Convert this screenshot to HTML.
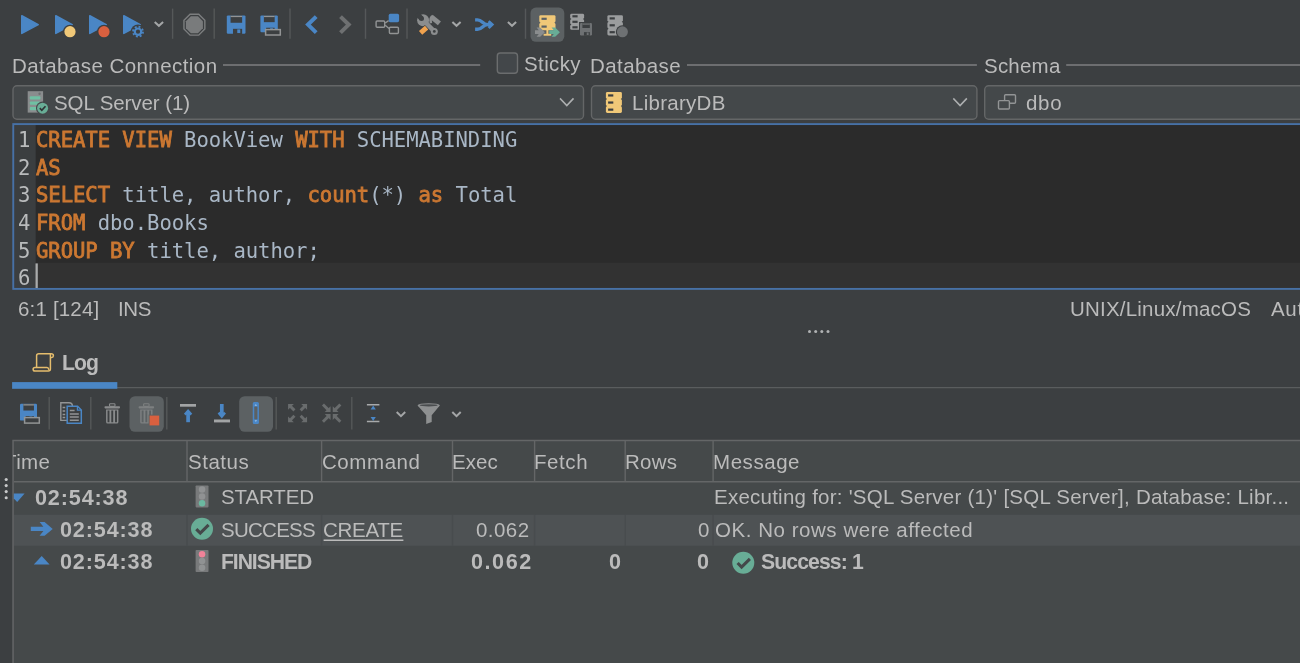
<!DOCTYPE html>
<html lang="en"><head><meta charset="utf-8"><title>SQL Workbench - Log</title>
<style>
html,body{margin:0;padding:0;background:#3c3f41;}
body{width:1300px;height:663px;overflow:hidden;position:relative;font-family:"Liberation Sans", sans-serif;color:#bbbbbb;}
#g{position:absolute;left:0;top:0;}
.t{position:absolute;will-change:transform;white-space:pre;font-size:20.5px;line-height:26px;color:#bbbbbb;}
.b{font-weight:bold;}
.ln,.cl{position:absolute;will-change:transform;white-space:pre;font-family:"DejaVu Sans Mono", "Liberation Mono", monospace;font-size:20.6px;line-height:27.6px;letter-spacing:-0.06px;}
.ln{left:17.6px;color:#b9bbbc;}
.cl{left:35.75px;color:#a9b7c6;}
.k{color:#cc7832;-webkit-text-stroke:0.8px #cc7832;}
.i{color:#a9b7c6;}
</style></head><body>
<svg id="g" width="1300" height="663" viewBox="0 0 1300 663">
<path d="M21.8 15.8 L38.2 24.6 L21.8 33.4 Z" fill="#4a86c5" stroke="#4a86c5" stroke-width="1.6" stroke-linejoin="round"/>
<path d="M55.8 15.8 L72.2 24.6 L55.8 33.4 Z" fill="#4a86c5" stroke="#4a86c5" stroke-width="1.6" stroke-linejoin="round"/>
<circle cx="70" cy="31.7" r="7" fill="#3c3f41"/><circle cx="70" cy="31.7" r="5.6" fill="#f0c878"/>
<path d="M89.8 15.8 L106.2 24.6 L89.8 33.4 Z" fill="#4a86c5" stroke="#4a86c5" stroke-width="1.6" stroke-linejoin="round"/>
<circle cx="104" cy="31.7" r="7" fill="#3c3f41"/><circle cx="104" cy="31.7" r="5.6" fill="#d9603f"/>
<path d="M123.8 15.8 L140.2 24.6 L123.8 33.4 Z" fill="#4a86c5" stroke="#4a86c5" stroke-width="1.6" stroke-linejoin="round"/>
<circle cx="138" cy="31.7" r="7.2" fill="#3c3f41"/><circle cx="138" cy="31.7" r="3.2" fill="none" stroke="#4a86c5" stroke-width="2.2"/><circle cx="138" cy="31.7" r="5" fill="none" stroke="#4a86c5" stroke-width="1.8" stroke-dasharray="1.96 1.96"/>
<path d="M154.70 22.00 L158.90 25.80 L163.10 22.00" fill="none" stroke="#a4a6a7" stroke-width="2.0"/>
<path d="M172.6 8.6 V38.8" stroke="#555859" stroke-width="1.4"/>
<polygon points="204.84,29.02 198.72,35.14 190.08,35.14 183.96,29.02 183.96,20.38 190.08,14.26 198.72,14.26 204.84,20.38" fill="none" stroke="#7c7e7f" stroke-width="1.4"/>
<polygon points="202.90,28.22 197.92,33.20 190.88,33.20 185.90,28.22 185.90,21.18 190.88,16.20 197.92,16.20 202.90,21.18" fill="#797b7c"/>
<path d="M214.2 8.6 V38.8" stroke="#555859" stroke-width="1.4"/>
<rect x="226.8" y="15.4" width="18.69999999999999" height="18.4" rx="1.2" fill="#4a86c5"/><rect x="230.54000000000002" y="15.4" width="11.593999999999992" height="7.359999999999999" fill="#3c3f41"/><rect x="230.54000000000002" y="15.8" width="11.593999999999992" height="1.3" fill="#929495"/><rect x="232.971" y="28.832" width="9.162999999999995" height="5.168" fill="#3c3f41"/><rect x="237.272" y="29.384" width="2.991999999999998" height="3.6799999999999997" fill="#4a86c5"/>
<rect x="260.4" y="15.4" width="17.400000000000034" height="16.9" rx="1.2" fill="#4a86c5"/><rect x="263.88" y="15.4" width="10.788000000000022" height="6.76" fill="#3c3f41"/><rect x="263.88" y="15.8" width="10.788000000000022" height="1.3" fill="#929495"/><rect x="266.142" y="27.737" width="8.526000000000016" height="4.763" fill="#3c3f41"/><rect x="270.144" y="28.244" width="2.7840000000000056" height="3.38" fill="#4a86c5"/>
<rect x="265.6" y="29.6" width="14.7" height="5.4" fill="#3c3f41" stroke="#929495" stroke-width="1.5"/>
<path d="M290 8.6 V38.8" stroke="#555859" stroke-width="1.4"/>
<path d="M316.2 16.6 L308 24.6 L316.2 32.6" fill="none" stroke="#4a86c5" stroke-width="4"/>
<path d="M340.5 16.6 L348.7 24.6 L340.5 32.6" fill="none" stroke="#6e7071" stroke-width="4"/>
<path d="M365.5 8.6 V38.8" stroke="#555859" stroke-width="1.4"/>
<rect x="388.7" y="13.8" width="10.4" height="8.4" rx="1.6" fill="#4a86c5"/>
<rect x="376.1" y="21" width="8.6" height="6.2" rx="1" fill="none" stroke="#929495" stroke-width="1.4"/>
<rect x="389.4" y="27.2" width="9" height="6.3" rx="1" fill="none" stroke="#929495" stroke-width="1.4"/>
<path d="M385.2 23 L388.6 20.6 M385.2 25.2 L389 28.6" stroke="#929495" stroke-width="1.3"/>
<path d="M407 8.6 V38.8" stroke="#555859" stroke-width="1.4"/>
<g><path d="M424.6 21.6 L434.3 31.4" stroke="#8b8d8e" stroke-width="4.4" stroke-linecap="round"/><circle cx="423.1" cy="20.2" r="6" fill="#8b8d8e"/><circle cx="421.5" cy="18.5" r="2.5" fill="#3c3f41"/><path d="M421.5 18.5 L416.6 13.6" stroke="#3c3f41" stroke-width="5" /><circle cx="434.3" cy="31.4" r="3.5" fill="#8b8d8e"/><circle cx="434.3" cy="31.4" r="1.4" fill="#3c3f41"/><path d="M431.4 16.8 L439.4 23.4" stroke="#8b8d8e" stroke-width="4.8" stroke-linecap="butt"/><path d="M433 16 Q429.6 17.6 430.9 23.2" fill="none" stroke="#8b8d8e" stroke-width="2.6"/><path d="M427 27.4 L420.2 33.2" stroke="#3c3f41" stroke-width="6.6"/><path d="M426.6 27.7 L420.6 32.9" stroke="#f0a24e" stroke-width="5" stroke-linecap="butt"/></g>
<path d="M452.40 22.00 L456.50 25.80 L460.60 22.00" fill="none" stroke="#a4a6a7" stroke-width="2.0"/>
<path d="M475.1 19.9 H477.5 C482.4 19.9 482.6 24.6 487.5 24.6 H491.5 M475.1 29.3 H477.5 C482.4 29.3 482.6 24.6 487.5 24.6" fill="none" stroke="#4a86c5" stroke-width="3.4"/>
<path d="M488.6 21.2 L492.2 24.6 L488.6 28" fill="none" stroke="#4a86c5" stroke-width="2.8"/>
<path d="M507.90 22.00 L512.00 25.80 L516.10 22.00" fill="none" stroke="#a4a6a7" stroke-width="2.0"/>
<path d="M525.5 8.6 V38.8" stroke="#555859" stroke-width="1.4"/>
<rect x="530.5" y="7.6" width="33.8" height="34.2" rx="5.5" fill="#5c6163"/>
<rect x="540.3" y="16" width="14.2" height="13" fill="#f0c878"/>
<rect x="539.3" y="15.2" width="16.2" height="7.2" rx="1.4" fill="#f0c878"/><rect x="541.5" y="17.7" width="5.2" height="2.2" fill="#5c6163"/>
<rect x="539.3" y="23" width="16.2" height="7.2" rx="1.4" fill="#f0c878"/><rect x="541.5" y="25.5" width="5.2" height="2.2" fill="#5c6163"/>
<rect x="546.4" y="30" width="2" height="4.2" fill="#f0c878"/><rect x="543.6" y="33.8" width="7.6" height="1.9" fill="#f0c878"/>
<path d="M535 30.300000000000004 H538.785 L536.5849999999999 27.550000000000004 H540.185 L544.9 32.2 L540.185 36.85 H536.5849999999999 L538.785 34.1 H535 Z" fill="#8a8d8e"/>
<path d="M549.2 30.300000000000004 H553.785 L551.5849999999999 27.550000000000004 H555.185 L559.9 32.2 L555.185 36.85 H551.5849999999999 L553.785 34.1 H549.2 Z" fill="#68ad96"/>
<rect x="571.2" y="15" width="11.9" height="14" fill="#9b9d9e"/>
<rect x="570.2" y="13.8" width="13.9" height="5" rx="1.4" fill="#9b9d9e"/><rect x="572.4000000000001" y="15.200000000000001" width="5.2" height="2.2" fill="#3c3f41"/>
<rect x="570.2" y="19.3" width="13.9" height="5" rx="1.4" fill="#9b9d9e"/><rect x="572.4000000000001" y="20.7" width="5.2" height="2.2" fill="#3c3f41"/>
<rect x="570.2" y="24.8" width="13.9" height="5" rx="1.4" fill="#9b9d9e"/><rect x="572.4000000000001" y="26.2" width="5.2" height="2.2" fill="#3c3f41"/>
<rect x="579" y="22" width="14" height="14.6" fill="#3c3f41"/>
<rect x="580" y="23" width="12" height="12.5" rx="1.2" fill="#6e7173"/><rect x="582.4" y="23" width="7.4399999999999995" height="5.0" fill="#3c3f41"/><rect x="582.4" y="23.4" width="7.4399999999999995" height="1.3" fill="#6e7173"/><rect x="583.96" y="32.125" width="5.88" height="3.575" fill="#3c3f41"/><rect x="586.72" y="32.5" width="1.92" height="2.5" fill="#6e7173"/>
<rect x="608.4" y="16" width="13.5" height="18" fill="#9b9d9e"/>
<rect x="607.4" y="15.2" width="15.5" height="6.4" rx="1.4" fill="#9b9d9e"/><rect x="609.6" y="17.299999999999997" width="5.2" height="2.2" fill="#3c3f41"/>
<rect x="607.4" y="22.1" width="15.5" height="6.4" rx="1.4" fill="#9b9d9e"/><rect x="609.6" y="24.2" width="5.2" height="2.2" fill="#3c3f41"/>
<rect x="607.4" y="29.0" width="15.5" height="6.4" rx="1.4" fill="#9b9d9e"/><rect x="609.6" y="31.1" width="5.2" height="2.2" fill="#3c3f41"/>
<circle cx="622.4" cy="31.8" r="6.6" fill="#3c3f41"/><circle cx="622.4" cy="31.8" r="5.5" fill="#6e7173"/>
<path d="M223 65 H480.2 M687 65 H976.9 M1066.2 65 H1300" stroke="#7d7f80" stroke-width="1.4"/>
<rect x="497.3" y="53" width="20.2" height="20.2" rx="3" fill="#43474a" stroke="#6b6d6e" stroke-width="1.4"/>
<rect x="13.0" y="85.8" width="570.5000000000001" height="33.4" rx="4" fill="#44484a" stroke="#646667" stroke-width="1.4"/>
<rect x="591.5" y="85.8" width="385.4000000000001" height="33.4" rx="4" fill="#44484a" stroke="#646667" stroke-width="1.4"/>
<rect x="984.7" y="85.8" width="334.6" height="33.4" rx="4" fill="#44484a" stroke="#646667" stroke-width="1.4"/>
<path d="M560.6 99.0 L566.8 105.6 L573.0 99.0" fill="none" stroke="#adafb0" stroke-width="1.6" stroke-linecap="square"/>
<path d="M953.9 99.0 L960.0999999999999 105.6 L966.3 99.0" fill="none" stroke="#adafb0" stroke-width="1.6" stroke-linecap="square"/>
<rect x="27.7" y="91.2" width="15.4" height="21.4" fill="#8a8d8e"/>
<rect x="29.8" y="96.2" width="10.6" height="3.2" rx="1" fill="#6fc0a3"/>
<rect x="29.8" y="101.60000000000001" width="10.6" height="3.2" rx="1" fill="#6fc0a3"/>
<rect x="29.8" y="107.0" width="10.6" height="3.2" rx="1" fill="#6fc0a3"/>
<circle cx="39.6" cy="93.8" r="1.2" fill="#6e7173"/>
<circle cx="42.6" cy="108.2" r="6.6" fill="#44484a"/><circle cx="42.6" cy="108.2" r="5.5" fill="#68ad96"/>
<path d="M39.8 108.2 L41.8 110.3 L45.5 106.2" fill="none" stroke="#2f3335" stroke-width="1.7"/>
<rect x="606.9" y="93" width="14" height="19" fill="#f0c878"/>
<rect x="605.9" y="92.1" width="16" height="6.7" rx="1.4" fill="#f0c878"/><rect x="608.1" y="94.35" width="5.2" height="2.2" fill="#3a3d3f"/>
<rect x="605.9" y="99.19999999999999" width="16" height="6.7" rx="1.4" fill="#f0c878"/><rect x="608.1" y="101.44999999999999" width="5.2" height="2.2" fill="#3a3d3f"/>
<rect x="605.9" y="106.3" width="16" height="6.7" rx="1.4" fill="#f0c878"/><rect x="608.1" y="108.55" width="5.2" height="2.2" fill="#3a3d3f"/>
<rect x="1004.6" y="94.7" width="10.9" height="8.6" rx="1" fill="none" stroke="#929495" stroke-width="1.4"/>
<rect x="998.5" y="100.6" width="10.9" height="8.4" rx="1" fill="#44484a" stroke="#929495" stroke-width="1.4"/>
<rect x="13.3" y="124" width="1300" height="164.9" fill="#2b2b2b"/>
<rect x="13.3" y="124" width="22.4" height="164.9" fill="#3b3e40"/>
<rect x="35.7" y="262.8" width="1300" height="26" fill="#323232"/>
<rect x="13.25" y="124.1" width="1300" height="164.8" fill="none" stroke="#4771a6" stroke-width="1.9"/>
<rect x="35.5" y="263.4" width="2.3" height="24.6" fill="#a9abac"/>
<circle cx="809.5" cy="331.6" r="1.5" fill="#b0b2b3"/>
<circle cx="815.7" cy="331.6" r="1.5" fill="#b0b2b3"/>
<circle cx="821.8" cy="331.6" r="1.5" fill="#b0b2b3"/>
<circle cx="828" cy="331.6" r="1.5" fill="#b0b2b3"/>
<path d="M117 387.6 H1300" stroke="#5a5d5e" stroke-width="1.4"/>
<rect x="12.1" y="382.1" width="105.2" height="6.7" fill="#4a86c5"/>
<path d="M36.6 367.4 V355.8 Q36.6 353.7 38.8 353.7 H51.2 Q53.4 353.7 53.4 355.8 Q53.4 357.4 51.6 357.4 M50.4 354 V369 Q50.4 371 48.2 371 H35 Q33.1 371 33.1 369.2 Q33.1 367.4 35 367.4 H47 Q48.6 367.4 48.6 369.2" fill="none" stroke="#e5bd6d" stroke-width="1.5" stroke-linejoin="round" stroke-linecap="round"/>
<rect x="20" y="403.8" width="17" height="16.80000000000001" rx="1.2" fill="#4a86c5"/><rect x="23.4" y="403.8" width="10.54" height="6.720000000000005" fill="#3c3f41"/><rect x="23.4" y="404.2" width="10.54" height="1.3" fill="#929495"/><rect x="25.61" y="416.064" width="8.33" height="4.736000000000003" fill="#3c3f41"/><rect x="29.520000000000003" y="416.56800000000004" width="2.72" height="3.3600000000000025" fill="#4a86c5"/>
<rect x="24.6" y="417.6" width="14.7" height="5.5" fill="#3c3f41" stroke="#929495" stroke-width="1.5"/>
<path d="M49.2 397 V429.5" stroke="#555859" stroke-width="1.4"/>
<path d="M60.8 402.7 H69 Q72.4 402.7 72.4 406 V420.4 H60.8 Z" fill="#3c3f41" stroke="#929495" stroke-width="1.4"/>
<path d="M62.6 407.6 H65.2 M62.6 411 H65.2 M62.6 414.4 H65.2 M62.6 417.6 H65.2" stroke="#929495" stroke-width="1.5"/>
<path d="M67.2 406.3 H77.6 L81.3 410 V423.2 H67.2 Z" fill="#3c3f41" stroke="#4a86c5" stroke-width="1.5"/>
<path d="M77.4 406.6 V410.2 H81" fill="none" stroke="#4a86c5" stroke-width="1.2"/>
<path d="M69.8 410.6 H74.6 M69.8 413.9 H78.8 M69.8 417.1 H78.8 M69.8 420.3 H78.8" stroke="#929495" stroke-width="1.5"/>
<path d="M90.8 397 V429.5" stroke="#555859" stroke-width="1.4"/>
<rect x="104.5" y="406.2" width="15.5" height="2.2" rx="0.8" fill="#8a8c8d"/><rect x="109.5" y="403.8" width="5.5" height="2.6" rx="0.8" fill="none" stroke="#8a8c8d" stroke-width="1.1"/><path d="M106.1 409.6 H118.4 V422 Q118.4 423.6 116.8 423.6 H107.7 Q106.1 423.6 106.1 422 Z" fill="#8a8c8d"/><path d="M108.5 410.6 V422.2 M112.25 410.6 V422.2 M116.0 410.6 V422.2" stroke="#3c3f41" stroke-width="1.9"/>
<rect x="129.5" y="396.2" width="34.3" height="35.6" rx="5.5" fill="#5c6163"/>
<rect x="138.6" y="406.2" width="15.5" height="2.2" rx="0.8" fill="#7d8081"/><rect x="143.6" y="403.8" width="5.5" height="2.6" rx="0.8" fill="none" stroke="#7d8081" stroke-width="1.1"/><path d="M140.2 409.6 H152.5 V422 Q152.5 423.6 150.9 423.6 H141.79999999999998 Q140.2 423.6 140.2 422 Z" fill="#7d8081"/><path d="M142.6 410.6 V422.2 M146.35 410.6 V422.2 M150.1 410.6 V422.2" stroke="#5c6163" stroke-width="1.9"/>
<rect x="148.6" y="414.6" width="11.4" height="11.6" fill="#5c6163"/><rect x="149.6" y="415.6" width="9.6" height="9.8" fill="#d9603f"/>
<path d="M166.8 397 V429.5" stroke="#555859" stroke-width="1.4"/>
<rect x="180" y="404" width="16" height="2.7" fill="#a2a4a5"/>
<path d="M188.1 422.2 V411.4" stroke="#4a86c5" stroke-width="3.7"/><path d="M184.9 414.7 L188.1 411 L191.3 414.7" fill="none" stroke="#4a86c5" stroke-width="2.6"/>
<rect x="214" y="419.5" width="16" height="2.9" fill="#a2a4a5"/>
<path d="M221.8 404 V416" stroke="#4a86c5" stroke-width="3.7"/><path d="M218.6 412.7 L221.8 416.4 L225 412.7" fill="none" stroke="#4a86c5" stroke-width="2.6"/>
<rect x="239.2" y="396.2" width="33.8" height="35.6" rx="5.5" fill="#5c6163"/>
<rect x="253.5" y="402.8" width="4.7" height="20.4" rx="0.8" fill="none" stroke="#4a86c5" stroke-width="1.5"/><rect x="253.5" y="402.8" width="4.7" height="3.8" fill="#4a86c5"/><rect x="253.5" y="419.4" width="4.7" height="3.8" fill="#4a86c5"/><path d="M254.6 405.8 L255.85 404 L257.1 405.8 Z M254.6 420.3 L255.85 422.1 L257.1 420.3 Z" fill="#9cc0e6"/>
<path d="M276.2 397 V429.5" stroke="#555859" stroke-width="1.4"/>
<path d="M300.65000000000003 415.80000000000007 L305.05 420.20000000000005" stroke="#696c6d" stroke-width="2.9"/><path d="M307.05 422.20000000000005 H301.25 L307.05 416.40000000000003 Z" fill="#696c6d"/>
<path d="M300.65000000000003 410.4 L305.05 406.0" stroke="#696c6d" stroke-width="2.9"/><path d="M307.05 404.0 H301.25 L307.05 409.8 Z" fill="#696c6d"/>
<path d="M294.45 415.80000000000007 L290.05 420.20000000000005" stroke="#696c6d" stroke-width="2.9"/><path d="M288.05 422.20000000000005 H293.85 L288.05 416.40000000000003 Z" fill="#696c6d"/>
<path d="M294.45 410.4 L290.05 406.0" stroke="#696c6d" stroke-width="2.9"/><path d="M288.05 404.0 H293.85 L288.05 409.8 Z" fill="#696c6d"/>
<path d="M340.35 421.70000000000005 L334.75 416.1" stroke="#696c6d" stroke-width="2.9"/><path d="M332.75 414.1 H338.55 L332.75 419.90000000000003 Z" fill="#696c6d"/>
<path d="M340.35 404.5 L334.75 410.1" stroke="#696c6d" stroke-width="2.9"/><path d="M332.75 412.1 H338.55 L332.75 406.3 Z" fill="#696c6d"/>
<path d="M322.94999999999993 421.70000000000005 L328.54999999999995 416.1" stroke="#696c6d" stroke-width="2.9"/><path d="M330.54999999999995 414.1 H324.74999999999994 L330.54999999999995 419.90000000000003 Z" fill="#696c6d"/>
<path d="M322.94999999999993 404.5 L328.54999999999995 410.1" stroke="#696c6d" stroke-width="2.9"/><path d="M330.54999999999995 412.1 H324.74999999999994 L330.54999999999995 406.3 Z" fill="#696c6d"/>
<path d="M351.8 397 V429.5" stroke="#555859" stroke-width="1.4"/>
<path d="M366.9 404.7 H379.4 M366.9 421.5 H379.4" stroke="#a8aaab" stroke-width="1.5"/>
<path d="M370.6 409.4 H375.8 L373.2 405.6 Z M370.6 417.1 H375.8 L373.2 420.9 Z" fill="#4a86c5"/>
<path d="M396.70 412.00 L400.95 416.10 L405.20 412.00" fill="none" stroke="#a4a6a7" stroke-width="2.0"/>
<path d="M417.6 405.4 L426.2 415.2 V424 L431.7 421.9 V415.2 L439.8 405.4 Z" fill="#8e9091"/><ellipse cx="428.7" cy="405.4" rx="11.1" ry="2.2" fill="#8e9091"/><ellipse cx="428.7" cy="405.3" rx="9" ry="1.1" fill="#4a4d4f"/>
<path d="M452.30 412.00 L456.50 416.10 L460.70 412.00" fill="none" stroke="#a4a6a7" stroke-width="2.0"/>
<rect x="13" y="440.2" width="1300" height="240" fill="#45494a"/>
<rect x="14" y="514.8" width="1300" height="31" fill="#4e5254"/>
<path d="M13.05 680 V440.4 H1300" fill="none" stroke="#646667" stroke-width="1.5"/>
<path d="M14 481.8 H1300" stroke="#646667" stroke-width="1.4"/>
<path d="M187 441 V481.4" stroke="#646667" stroke-width="1.4"/>
<path d="M187 514.8 V545.8" stroke="#484c4e" stroke-width="1.4"/>
<path d="M321.6 441 V481.4" stroke="#646667" stroke-width="1.4"/>
<path d="M321.6 514.8 V545.8" stroke="#484c4e" stroke-width="1.4"/>
<path d="M452.5 441 V481.4" stroke="#646667" stroke-width="1.4"/>
<path d="M452.5 514.8 V545.8" stroke="#484c4e" stroke-width="1.4"/>
<path d="M534.6 441 V481.4" stroke="#646667" stroke-width="1.4"/>
<path d="M534.6 514.8 V545.8" stroke="#484c4e" stroke-width="1.4"/>
<path d="M625.2 441 V481.4" stroke="#646667" stroke-width="1.4"/>
<path d="M625.2 514.8 V545.8" stroke="#484c4e" stroke-width="1.4"/>
<path d="M713.1 441 V481.4" stroke="#646667" stroke-width="1.4"/>
<path d="M713.1 514.8 V545.8" stroke="#484c4e" stroke-width="1.4"/>
<circle cx="6.2" cy="479.5" r="1.55" fill="#c8c9ca"/>
<circle cx="6.2" cy="485.6" r="1.55" fill="#c8c9ca"/>
<circle cx="6.2" cy="491.6" r="1.55" fill="#c8c9ca"/>
<circle cx="6.2" cy="497.7" r="1.55" fill="#c8c9ca"/>
<path d="M13.8 493.6 H24.6 L17.2 502 L13.8 498.4 Z" fill="#4a86c5"/>
<path d="M30.8 526.7 H43.4 L39.6 522 H44.6 L52.7 528.9 L44.6 535.8 H39.6 L43.4 531.1 H30.8 Z" fill="#4a86c5"/>
<path d="M33.8 564.6 L41.7 556 L49.6 564.6 Z" fill="#4a86c5"/>
<rect x="195.6" y="485.4" width="12.9" height="22" rx="0.8" fill="#787a7b"/><circle cx="202.05" cy="489.59999999999997" r="3.25" fill="#909293"/><circle cx="202.05" cy="496.4" r="3.25" fill="#909293"/><circle cx="202.05" cy="503.2" r="3.25" fill="#6bb8a0"/>
<rect x="195.6" y="550" width="12.9" height="22" rx="0.8" fill="#787a7b"/><circle cx="202.05" cy="554.2" r="3.25" fill="#f08298"/><circle cx="202.05" cy="561.0" r="3.25" fill="#909293"/><circle cx="202.05" cy="567.8000000000001" r="3.25" fill="#909293"/>
<circle cx="202" cy="528.8" r="11" fill="#68ad96"/><path d="M196.3 529.0999999999999 L200.3 533.0999999999999 L208.6 524.9" fill="none" stroke="#44484a" stroke-width="3.1"/>
<circle cx="743.3" cy="562.7" r="11" fill="#68ad96"/><path d="M737.5999999999999 563.0 L741.5999999999999 567.0 L749.9 558.8000000000001" fill="none" stroke="#44484a" stroke-width="3.1"/>
<path d="M323.6 540.3 H403.4" stroke="#bbbbbb" stroke-width="1.4"/>
</svg>
<span class="ln" style="top:127.07px">1</span>
<span class="cl" style="top:127.07px"><span class="k">CREATE VIEW</span><span class="i"> BookView </span><span class="k">WITH</span><span class="i"> SCHEMABINDING</span></span>
<span class="ln" style="top:154.69px">2</span>
<span class="cl" style="top:154.69px"><span class="k">AS</span></span>
<span class="ln" style="top:182.31px">3</span>
<span class="cl" style="top:182.31px"><span class="k">SELECT</span><span class="i"> title, author, </span><span class="k">count</span><span class="i">(*) </span><span class="k">as</span><span class="i"> Total</span></span>
<span class="ln" style="top:209.93px">4</span>
<span class="cl" style="top:209.93px"><span class="k">FROM</span><span class="i"> dbo.Books</span></span>
<span class="ln" style="top:237.55px">5</span>
<span class="cl" style="top:237.55px"><span class="k">GROUP BY</span><span class="i"> title, author;</span></span>
<span class="ln" style="top:265.17px">6</span>
<span class="t" id="t0" style="left:12.00px;top:52.70px;letter-spacing:0.439px;">Database Connection</span>
<span class="t" id="t1" style="left:524.20px;top:51.10px;letter-spacing:0.380px;">Sticky</span>
<span class="t" id="t2" style="left:589.60px;top:52.70px;letter-spacing:0.414px;">Database</span>
<span class="t" id="t3" style="left:983.60px;top:52.70px;letter-spacing:0.220px;">Schema</span>
<span class="t" id="t4" style="left:53.80px;top:90.10px;letter-spacing:-0.077px;">SQL Server (1)</span>
<span class="t" id="t5" style="left:631.80px;top:90.10px;letter-spacing:0.275px;">LibraryDB</span>
<span class="t" id="t6" style="left:1025.50px;top:90.10px;letter-spacing:0.700px;">dbo</span>
<span class="t" id="t7" style="left:18.00px;top:295.70px;letter-spacing:0.175px;">6:1 [124]</span>
<span class="t" id="t8" style="left:118.00px;top:295.70px;letter-spacing:-0.350px;">INS</span>
<span class="t" id="t9" style="left:1070.40px;top:295.70px;letter-spacing:0.207px;">UNIX/Linux/macOS</span>
<span class="t" id="t10" style="left:1271.40px;top:295.70px;letter-spacing:0.667px;">Auto</span>
<span class="t b" id="t11" style="left:61.80px;top:349.95px;letter-spacing:-0.900px;font-size:21.2px;">Log</span>
<span class="t" id="t12" style="left:4.20px;top:448.70px;letter-spacing:0.400px;clip-path:inset(0 0 0 9.80px);">Time</span>
<span class="t" id="t13" style="left:187.80px;top:448.70px;letter-spacing:0.520px;">Status</span>
<span class="t" id="t14" style="left:322.40px;top:448.70px;letter-spacing:0.567px;">Command</span>
<span class="t" id="t15" style="left:452.30px;top:448.70px;letter-spacing:0.099px;">Exec</span>
<span class="t" id="t16" style="left:533.70px;top:448.70px;letter-spacing:0.575px;">Fetch</span>
<span class="t" id="t17" style="left:624.70px;top:448.70px;letter-spacing:0.234px;">Rows</span>
<span class="t" id="t18" style="left:712.70px;top:448.70px;letter-spacing:0.551px;">Message</span>
<span class="t b" id="t19" style="left:34.70px;top:484.62px;letter-spacing:0.857px;font-size:21.6px;">02:54:38</span>
<span class="t" id="t20" style="left:220.60px;top:484.30px;letter-spacing:-0.133px;">STARTED</span>
<span class="t" id="t21" style="left:714.00px;top:484.30px;letter-spacing:0.242px;">Executing for: 'SQL Server (1)' [SQL Server], Database: Libr...</span>
<span class="t b" id="t22" style="left:59.60px;top:516.82px;letter-spacing:0.857px;font-size:21.6px;">02:54:38</span>
<span class="t" id="t23" style="left:220.60px;top:516.50px;letter-spacing:-0.734px;">SUCCESS</span>
<span class="t" id="t24" style="left:322.80px;top:516.50px;letter-spacing:-0.280px;">CREATE</span>
<span class="t" id="t25" style="left:476.40px;top:516.50px;letter-spacing:0.450px;">0.062</span>
<span class="t" id="t26" style="left:698.00px;top:516.50px;letter-spacing:0.000px;">0</span>
<span class="t" id="t27" style="left:715.00px;top:516.50px;letter-spacing:0.542px;">OK. No rows were affected</span>
<span class="t b" id="t28" style="left:59.60px;top:549.12px;letter-spacing:0.857px;font-size:21.6px;">02:54:38</span>
<span class="t b" id="t29" style="left:220.60px;top:548.85px;letter-spacing:-1.087px;font-size:21.2px;">FINISHED</span>
<span class="t b" id="t30" style="left:471.40px;top:549.12px;letter-spacing:1.550px;font-size:21.6px;">0.062</span>
<span class="t b" id="t31" style="left:609.00px;top:549.12px;letter-spacing:0.000px;font-size:21.6px;">0</span>
<span class="t b" id="t32" style="left:696.70px;top:549.12px;letter-spacing:0.000px;font-size:21.6px;">0</span>
<span class="t b" id="t33" style="left:761.40px;top:548.85px;letter-spacing:-0.889px;font-size:21.2px;">Success: 1</span>
</body></html>
